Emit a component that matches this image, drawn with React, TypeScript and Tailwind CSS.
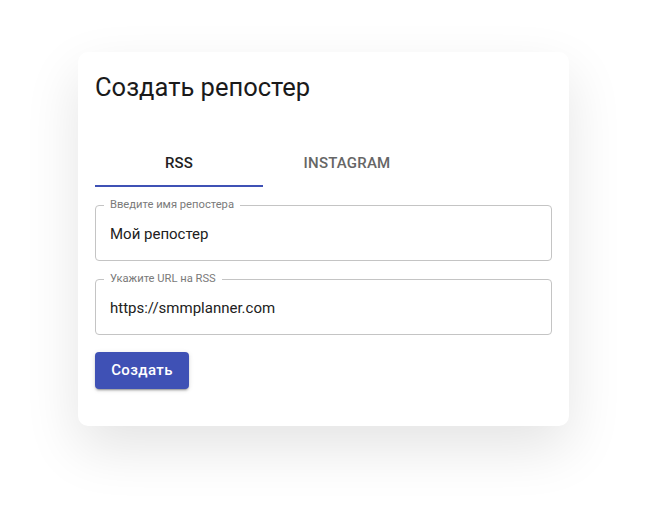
import React from "react";

function Field({ label, value }: { label: string; value: string }) {
  return (
    <div className="relative h-[56px] rounded-[4px] border border-[#c4c4c4] flex items-center px-[14px] pt-[2px]">
      <span className="absolute left-[8px] top-[-9px] bg-white px-[6px] text-[11.2px] leading-[16px] text-[#7a7a7a]">
        {label}
      </span>
      <span className="text-[15px] leading-[24px] text-[#212121]">{value}</span>
    </div>
  );
}

export default function App() {
  return (
    <div
      className="w-full h-[528px] bg-white pt-[52px] pl-[78px]"
      style={{ fontFamily: "Roboto, 'Noto Sans', sans-serif" }}
    >
      <div className="w-[491px] rounded-[10px] bg-white pt-[19px] pb-[37px] px-[17px] shadow-[0_22px_55px_rgba(0,0,0,0.11)]">
        <h1 className="text-[25.5px] leading-[33px] font-normal text-[#1a1a1a]">Создать репостер</h1>
        <div className="mt-[35px] flex">
          <div className="relative w-[168px] h-[48px] flex items-center justify-center text-[15px] font-medium tracking-[0.2px] text-[#212121]">
            RSS
            <div className="absolute left-0 right-0 bottom-0 h-[2px] bg-[#3f51b5]" />
          </div>
          <div className="w-[168px] h-[48px] flex items-center justify-center text-[15px] font-medium tracking-[0.2px] text-[#666666]">
            INSTAGRAM
          </div>
        </div>
        <div className="mt-[18px] flex flex-col gap-[18px]">
          <Field label="Введите имя репостера" value="Мой репостер" />
          <Field label="Укажите URL на RSS" value="https://smmplanner.com" />
        </div>
        <button className="mt-[17px] h-[37px] w-[94px] rounded-[4px] bg-[#3f51b5] text-white text-[15px] font-medium tracking-[0.4px] shadow-[0_3px_1px_-2px_rgba(0,0,0,0.2),0_2px_2px_0_rgba(0,0,0,0.14),0_1px_5px_0_rgba(0,0,0,0.12)]">
          Создать
        </button>
      </div>
    </div>
  );
}
